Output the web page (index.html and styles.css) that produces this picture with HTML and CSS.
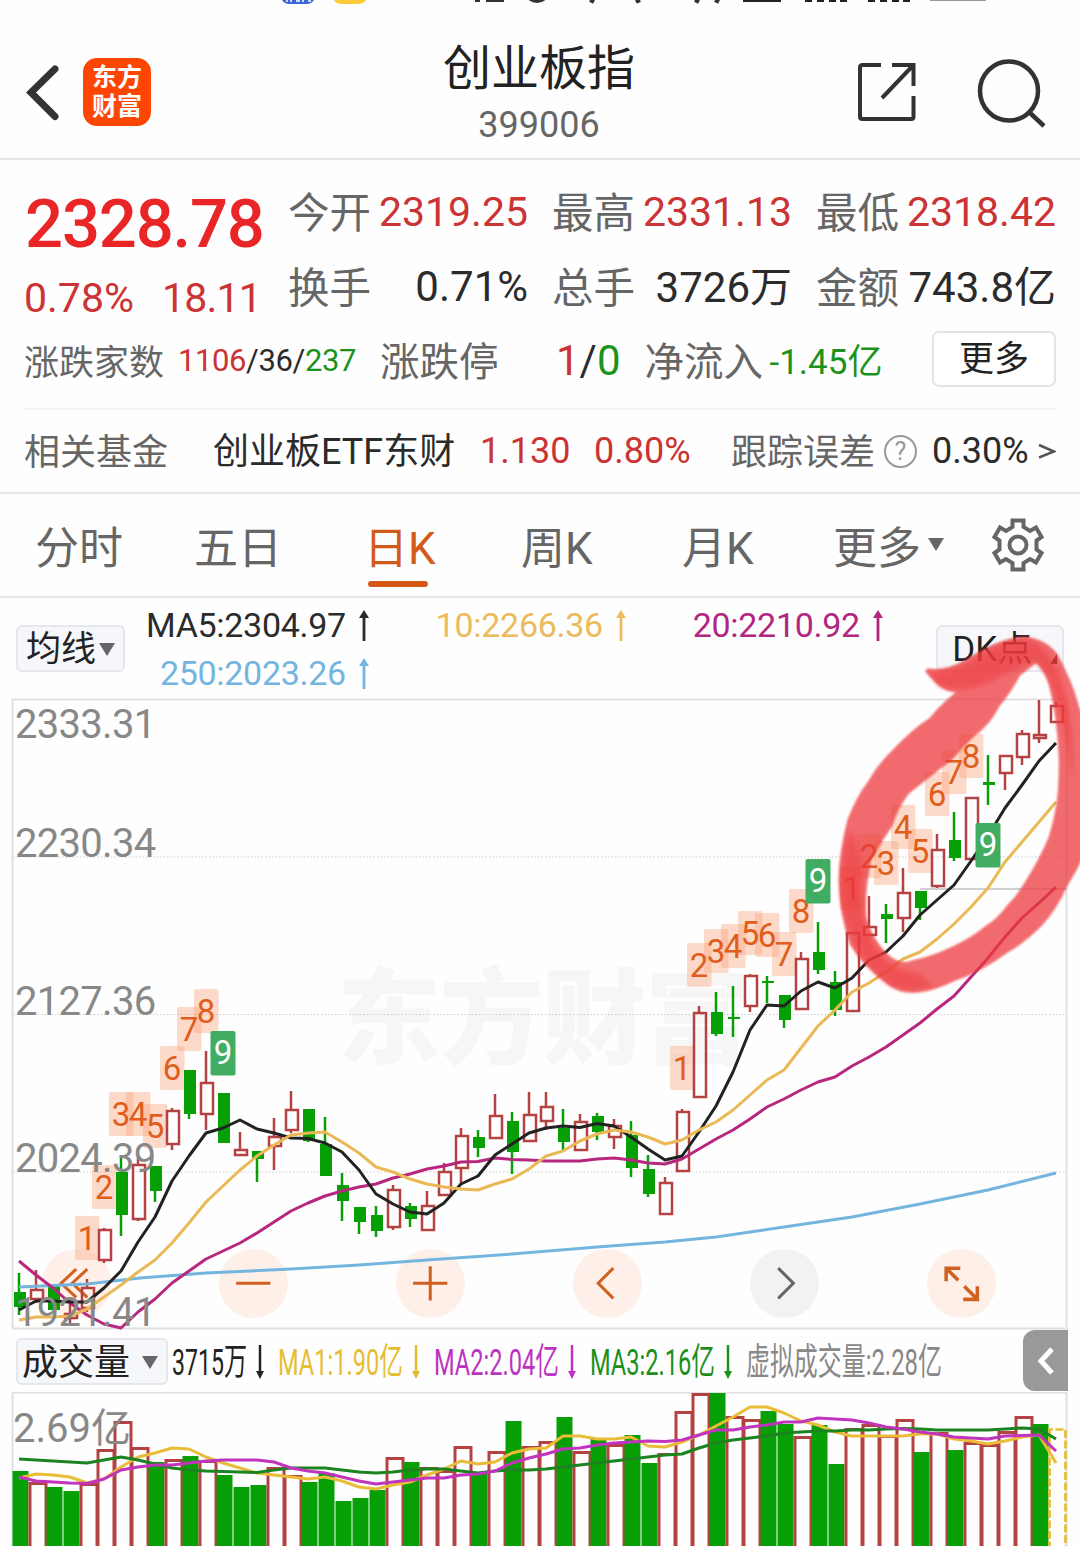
FILE: index.html
```html
<!DOCTYPE html>
<html lang="zh-CN">
  <head>
    <meta charset="UTF-8" />
    <meta name="viewport" content="width=device-width, initial-scale=1.0" />
    <title>创业板指 399006</title>
    <link rel="stylesheet" href="styles.css">
  </head>
  <body>
    <svg class="status-bar" viewBox="0 0 1080 6">
      <rect x="281" y="-20" width="34" height="24" rx="8" fill="#3a66d8" />
      <path d="M287 0v2M291 0v2M296 1h4M303 0v2M308 1h3" stroke="#fff" stroke-width="1.5" />
      <rect x="333" y="-20" width="34" height="24" rx="8" fill="#fccb3c" />
      <path d="M475 0h5M486 0h18M590 0l4 2M640 0l-4 2M695 0l4 2M715 0l4 2" stroke="#333" stroke-width="4" />
      <path d="M527 -4q10 10 20 0" fill="none" stroke="#333" stroke-width="4" />
      <path d="M743 0h38M805 0h7M817 0h7M829 0h7M840 0h7M868 0h7M880 0h7M892 0h7M903 0h7" stroke="#222" stroke-width="4" />
      <path d="M930 0h56" stroke="#999" stroke-width="2" />
    </svg>

    <header class="top-bar">
      <svg class="back" viewBox="0 0 36 60"><path d="M29 6 5 29.500l24 24" /></svg>
      <div class="app-logo"><span>东方</span><span>财富</span></div>
      <div class="title">
        <h1>创业板指</h1>
        <p>399006</p>
      </div>
      <svg class="share" viewBox="0 0 60 60">
        <path d="M24 3H5.500Q3 3 3 5.500V54.500Q3 57 5.500 57H54Q56.500 57 56.500 54.500V34M35 3H56.500V24M56 3.500 25 36" />
      </svg>
      <svg class="search" viewBox="0 0 72 72">
        <ellipse cx="33" cy="33" rx="29" ry="29.500" />
        <path d="M53 54 68 68" />
      </svg>
    </header>

    <section class="quote">
      <div class="quote-grid">
        <div class="price">
          <strong>2328.78</strong>
          <div class="change"><span>0.78%</span><span class="diff">18.11</span></div>
        </div>
        <div class="cell"><label>今开</label><b class="up">2319.25</b></div>
        <div class="cell"><label>最高</label><b class="up">2331.13</b></div>
        <div class="cell"><label>最低</label><b class="up">2318.42</b></div>
        <div class="cell"><label>换手</label><b>0.71%</b></div>
        <div class="cell"><label>总手</label><b class="cjk">3726万</b></div>
        <div class="cell"><label>金额</label><b class="cjk">743.8亿</b></div>
      </div>
      <div class="breadth">
        <label class="home">涨跌家数</label>
        <span class="count"><i class="up">1106</i>/36/<i class="down">237</i></span>
        <label class="limit">涨跌停</label>
        <span class="limit-num"><i class="up">1</i>/<i class="down">0</i></span>
        <label class="flow">净流入</label>
        <span class="flow-num down">-1.45亿</span>
        <button class="more-btn">更多</button>
      </div>
      <div class="fund">
        <label>相关基金</label>
        <span class="fund-name">创业板ETF东财</span>
        <span class="fund-price up">1.130</span>
        <span class="fund-pct up">0.80%</span>
        <label class="track">跟踪误差</label>
        <span class="help">?</span>
        <span class="track-num">0.30%</span>
        <svg class="arrow-right" viewBox="0 0 18 18"><path d="M1 3 16 9.500 1 15.500" /></svg>
      </div>
    </section>

    <nav class="tabs">
      <span class="tab">分时</span>
      <span class="tab">五日</span>
      <span class="tab active">日K</span>
      <span class="tab">周K</span>
      <span class="tab">月K</span>
      <span class="tab more">更多<i class="caret"></i></span>
      <svg class="gear" viewBox="0 0 52 54">
        <path d="M20.500 2.500h11v6.500l6.500 4 6-3.500 5.500 9.500-5 3.500v9l5 3.500-5.500 9.500-6-3.500-6.500 4v6.500h-11V45l-6.500-4-6 3.500L2.500 35l5-3.500v-9L2.500 19 8 9.500l6 3.500 6.500-4z" />
        <circle cx="26" cy="27" r="8.500" />
      </svg>
    </nav>

    <div class="ma-bar">
      <button class="pill ma-btn">均线<i class="caret"></i></button>
      <div class="ma-list">
        <span class="ma ma5">MA5:2304.97<svg class="trend" viewBox="0 0 12 32"><path d="M6 8v24" /><path class="tip" d="M6 1 11 9H1z" /></svg></span>
        <span class="ma ma10">10:2266.36<svg class="trend" viewBox="0 0 12 32"><path d="M6 8v24" /><path class="tip" d="M6 1 11 9H1z" /></svg></span>
        <span class="ma ma20">20:2210.92<svg class="trend" viewBox="0 0 12 32"><path d="M6 8v24" /><path class="tip" d="M6 1 11 9H1z" /></svg></span>
        <span class="ma ma250">250:2023.26<svg class="trend" viewBox="0 0 12 32"><path d="M6 8v24" /><path class="tip" d="M6 1 11 9H1z" /></svg></span>
      </div>
      <button class="pill dk-btn">DK点<i class="corner"></i></button>
    </div>

    <div class="chart">
      <div class="tools">
        <span class="tool"><svg viewBox="0 0 68 68"><path d="M34 20 19 34l15 14M45 20 30 34l15 14" /></svg></span>
        <span class="tool"><svg viewBox="0 0 68 68"><path d="M17 34h34" /></svg></span>
        <span class="tool"><svg viewBox="0 0 68 68"><path d="M17 34h34M34 17v34" /></svg></span>
        <span class="tool"><svg viewBox="0 0 68 68"><path d="M40 19 25 34l15 15" /></svg></span>
        <span class="tool off"><svg viewBox="0 0 68 68"><path d="M28 19 43 34 28 49" /></svg></span>
        <span class="tool"><svg viewBox="0 0 68 68"><path d="M19 32V19h14M20 20l11 11M50 37v13H36M49 49 37 37" stroke-width="3.500" /></svg></span>
      </div>
      <svg id="kline" viewBox="0 698 1080 632"></svg>
    </div>

    <div class="vol-bar">
      <button class="pill vol-btn">成交量<i class="caret"></i></button>
      <svg class="vol-legend" id="volLegend" viewBox="168 1330 840 62"></svg>
      <span class="collapse"><svg viewBox="0 0 18 30"><path d="M15 3 4 15l11 12" /></svg></span>
    </div>
    <svg class="volume" id="volume" viewBox="0 1392 1080 154"></svg>

    <!-- hand drawn marker ring -->
    <svg class="marker" viewBox="830 620 250 390">
      <path class="ink" fill-rule="evenodd" d="M928 671Q945 674 965 663Q1000 640 1025 639Q1045 642 1055 655Q1070 682 1076 705L1086 735V845Q1076 868 1065 885Q1055 908 1040 924Q1022 942 1007 950Q980 970 953 979Q935 988 918 990Q902 992 890 983Q864 964 852 943Q842 912 841 880Q842 850 850 820Q859 797 870 783Q880 765 896 750Q915 730 931 720Q944 704 964 689Q948 692 938 682ZM1018 674Q1010 690 998 704Q988 724 972 735Q960 747 950 758Q922 780 907 792Q895 808 890 825Q875 847 869 860Q862 890 864 918Q870 940 884 954Q897 968 912 963Q935 958 953 949Q973 940 987 928Q1000 920 1009 907Q1020 896 1026 885Q1042 860 1051 838Q1058 815 1060 795Q1062 770 1061 753Q1059 715 1052 687Q1047 668 1036 660Z" />
      <path class="ink dark" d="M928 671Q955 674 985 652Q1010 638 1030 640Q1050 648 1063 685Q1076 735 1072 780Q1065 725 1050 680L1036 660Q1010 672 985 684Q960 694 940 686Z" />
      <path class="ink dark" d="M850 830Q862 845 861 890Q860 930 882 955Q892 970 918 973L934 986Q905 995 887 984Q845 950 841 895Q840 855 850 830Z" />
    </svg>

    <script src="chart.js"></script>
  </body>
</html>
```

FILE: styles.css
```css
* {
  margin: 0;
  padding: 0;
  box-sizing: border-box;
}
body {
  position: relative;
  width: 1080px;
  height: 1546px;
  overflow: hidden;
  background-color: #fefefe;
  color: #2b2b2b;
  font-family: Roboto, "Noto Sans CJK SC", sans-serif;
}
svg {
  display: block;
  flex: none;
  fill: none;
}
i {
  font-style: normal;
}
button {
  font-family: inherit;
  color: #222;
}
.up {
  color: #cb3334;
}
.down {
  color: #1b921b;
}

.status-bar {
  width: 1080px;
  height: 6px;
}

/* header */
.top-bar {
  display: flex;
  align-items: center;
  height: 154px;
  padding: 20px 32px 0 26px;
  border-bottom: 2px solid #e6e6e6;
}
.top-bar svg {
  stroke: #333;
}
.back {
  width: 36px;
  height: 60px;
  margin-top: 2px;
  stroke-width: 7;
  stroke-linecap: round;
}
.app-logo {
  display: flex;
  flex-direction: column;
  align-items: center;
  justify-content: center;
  width: 68px;
  height: 68px;
  margin-left: 21px;
  border-radius: 14px;
  background-color: #fd4603;
  color: #fff;
  font-size: 25px;
  font-weight: 700;
  line-height: 29px;
}
.title {
  width: 200px;
  margin: 6px 0 0 288px;
  text-align: center;
}
.title h1 {
  font-size: 48px;
  font-weight: 400;
  line-height: 56px;
  color: #222;
}
.title p {
  padding-top: 4px;
  font-size: 36px;
  line-height: 48px;
  color: #666;
}
.share {
  width: 60px;
  height: 60px;
  margin-left: 218px;
  stroke-width: 4;
}
.search {
  width: 72px;
  height: 72px;
  margin-top: 4px;
  margin-left: 59px;
  stroke-width: 4.500;
}

/* quote */
.quote {
  height: 334px;
  padding: 14px 24px 0;
  border-bottom: 2px solid #e6e6e6;
}
.quote label {
  padding-bottom: 4px;
  color: #666;
}
.quote-grid {
  display: grid;
  grid-template-columns: 240px 238px 238px 238px;
  grid-template-rows: 75px 75px;
  column-gap: 26px;
}
.price {
  grid-row: span 2;
  color: #cb3334;
}
.price strong {
  display: block;
  height: 94px;
  padding: 6px 0 0 1px;
  font-size: 67px;
  font-weight: 500;
  line-height: 88px;
  letter-spacing: -1.2px;
  color: #e92526;
}
.change {
  display: flex;
  justify-content: space-between;
  padding-right: 3px;
  font-size: 41px;
  line-height: 60px;
}
.diff {
  letter-spacing: -0.8px;
}
.cell {
  display: flex;
  align-items: center;
  justify-content: space-between;
  font-size: 42px;
  white-space: nowrap;
}
.cell label {
  margin-left: -2px;
  padding-bottom: 4px;
  font-size: 41.500px;
}
.cell b {
  font-weight: 400;
}
.cell b.up {
  font-size: 41px;
}
.cell b.cjk {
  padding-bottom: 6px;
}
.breadth {
  display: flex;
  align-items: center;
  height: 86px;
  padding-bottom: 12px;
  border-bottom: 2px solid #f4f4f4;
  white-space: nowrap;
}
.breadth .home {
  width: 154px;
  padding-bottom: 2px;
  font-size: 35px;
}
.count {
  width: 202px;
  font-size: 31px;
  letter-spacing: -0.4px;
}
.breadth .limit,
.breadth .flow {
  padding-bottom: 4px;
  font-size: 39.500px;
}
.limit-num {
  width: 122px;
  text-align: right;
  font-size: 42px;
}
.breadth .flow {
  width: 125px;
  margin-left: 24px;
}
.flow-num {
  padding-bottom: 4px;
  font-size: 35px;
}
.more-btn {
  width: 124px;
  height: 56px;
  margin: -2px 0 0 auto;
  padding-top: 1px;
  border: 2px solid #e4e4e6;
  border-radius: 7px;
  background: #fff;
  font-size: 35px;
  line-height: 51px;
}
.fund {
  display: flex;
  align-items: center;
  height: 82px;
  font-size: 36px;
  white-space: nowrap;
}
.fund label {
  width: 144px;
}
.fund-name {
  width: 240px;
  margin-left: 45px;
  padding-bottom: 6px;
}
.fund-price {
  width: 114px;
  margin-left: 27px;
}
.fund-pct {
  width: 137px;
}
.help {
  width: 33px;
  height: 33px;
  margin-left: 9px;
  border: 2px solid #999;
  border-radius: 50%;
  color: #999;
  font-size: 25px;
  line-height: 30px;
  text-align: center;
}
.track-num {
  margin-left: 15px;
}
.arrow-right {
  width: 18px;
  height: 18px;
  margin-left: auto;
  stroke: #555;
  stroke-width: 2.500;
}

/* tabs */
.tabs {
  display: flex;
  align-items: center;
  height: 104px;
  padding-left: 35px;
  border-bottom: 2px solid #e6e6e6;
  font-size: 44px;
  color: #666;
  white-space: nowrap;
}
.tab {
  position: relative;
  width: 159px;
  padding-bottom: 1px;
}
.tab.active {
  text-indent: -2px;
  color: #d25b1b;
}
.tab:nth-child(2) {
  width: 172px;
}
.tab:nth-child(3) {
  width: 155px;
}
.tab:nth-child(4) {
  width: 161px;
}
.tab:nth-child(5) {
  width: 151px;
}
.tab.active::after {
  content: "";
  position: absolute;
  left: 2px;
  bottom: -9px;
  width: 60px;
  height: 6px;
  border-radius: 3px;
  background-color: #d55a18;
}
.tab.more {
  display: flex;
  align-items: center;
}
.caret {
  border: 8px solid transparent;
  border-top: 13px solid #666;
  border-bottom: 0;
}
.tab.more .caret {
  margin: 0 0 0 7px;
}
.gear {
  width: 52px;
  height: 54px;
  stroke: #666;
  stroke-width: 4;
}

/* moving averages */
.ma-bar {
  display: flex;
  align-items: flex-start;
  height: 100px;
  padding: 0 16px;
}
.pill {
  display: flex;
  align-items: center;
  height: 47px;
  margin-top: 27px;
  padding-top: 2px;
  border: 2px solid #e6e7ec;
  border-radius: 6px;
  background-color: #f6f7fa;
  font-size: 35px;
  line-height: 40px;
  white-space: nowrap;
}
.ma-btn {
  width: 109px;
  padding-left: 8px;
}
.ma-btn .caret {
  margin-left: 3px;
}
.ma-list {
  display: grid;
  grid-template-columns: 223px 272px 192px;
  grid-template-rows: 48px 48px;
  width: 791px;
  margin-left: 22px;
  padding-top: 3px;
  font-size: 34px;
  letter-spacing: -0.3px;
}
.ma {
  display: flex;
  align-items: center;
  justify-content: flex-end;
  white-space: nowrap;
}
.ma10 {
  padding-right: 15px;
  color: #ebbb5c;
}
.ma20 {
  margin-right: -50px;
  color: #b12780;
}
.ma250 {
  color: #74b5e0;
}
.trend {
  width: 12px;
  height: 32px;
  margin-left: 12px;
  stroke: currentColor;
  stroke-width: 2.800;
}
.trend .tip {
  fill: currentColor;
  stroke: none;
}
.dk-btn {
  position: relative;
  width: 128px;
  padding-left: 14px;
}
.corner {
  position: absolute;
  right: 5px;
  bottom: 6px;
  border-left: 7px solid transparent;
  border-bottom: 10px solid #222;
}

/* k line */
.chart {
  position: relative;
  height: 632px;
}
#kline {
  position: relative;
}
.chart text,
.volume text {
  font-size: 40px;
  fill: #888;
}
.chart .axis {
  letter-spacing: -0.7px;
}
.chart .water {
  font-size: 104px;
  font-weight: 900;
  fill: #f6f6f6;
}
.chart .seq {
  font-size: 33px;
  fill: #e05d1c;
  text-anchor: middle;
}
.chart .seq.nine {
  fill: #fff;
}
.tools {
  position: absolute;
  left: 42px;
  top: 551px;
  display: flex;
  gap: 108.500px;
}
.tool {
  width: 68.500px;
  height: 68.500px;
  border-radius: 50%;
  background-color: #fef0e9;
}
.tool svg {
  stroke: #d0601f;
  stroke-width: 3;
}
.tool.off {
  background-color: #f2f2f3;
}
.tool.off svg {
  stroke: #666;
}

/* volume */
.vol-bar {
  display: flex;
  height: 62px;
  padding-left: 16px;
}
.vol-btn {
  width: 152px;
  margin-top: 8px;
  padding-left: 4px;
  font-size: 36px;
}
.vol-btn .caret {
  margin-left: 12px;
}
.vol-legend {
  width: 840px;
  height: 62px;
  font-size: 37px;
}
.collapse {
  display: flex;
  align-items: center;
  justify-content: center;
  width: 45px;
  height: 61px;
  margin-left: 15px;
  border-radius: 12px 0 0 12px;
  background-color: #999;
}
.collapse svg {
  width: 18px;
  height: 30px;
  stroke: #fff;
  stroke-width: 5;
}
.volume {
  width: 1080px;
  height: 154px;
}

.marker {
  position: absolute;
  left: 830px;
  top: 620px;
  width: 250px;
  height: 390px;
}
.ink {
  fill: #ed393c;
  stroke: #ed393c;
  stroke-width: 5;
  stroke-linejoin: round;
  opacity: 0.74;
  filter: blur(0.8px);
}
.ink.dark {
  stroke: none;
  opacity: 0.5;
  filter: blur(2.5px);
}
```

FILE: chart.js
```js
const STEP = 17;
const X0 = 19;
const RED = "#b54242";
const GREEN = "#06a006";

// type, high, body top, body bottom, low
const candles = [
  ["g", 1273, 1292, 1307, 1315], ["r", 1270, 1290, 1299, 1303], ["g", 1285, 1286, 1310, 1310], ["r", 1300, 1314, 1318, 1325],
  ["r", 1279, 1288, 1308, 1312], ["r", 1228, 1230, 1260, 1263], ["g", 1155, 1172, 1215, 1236], ["r", 1156, 1165, 1219, 1221],
  ["g", 1166, 1166, 1191, 1202], ["r", 1108, 1111, 1144, 1150], ["g", 1070, 1070, 1114, 1119], ["r", 1051, 1083, 1114, 1130],
  ["g", 1093, 1093, 1143, 1143], ["r", 1132, 1150, 1155, 1155], ["g", 1151, 1151, 1159, 1182], ["r", 1118, 1137, 1146, 1170],
  ["r", 1091, 1110, 1130, 1133], ["g", 1109, 1109, 1141, 1142], ["g", 1117, 1144, 1176, 1176], ["g", 1173, 1185, 1201, 1221],
  ["g", 1207, 1207, 1222, 1234], ["g", 1206, 1215, 1231, 1237], ["r", 1185, 1190, 1227, 1230], ["g", 1203, 1206, 1219, 1227],
  ["r", 1191, 1206, 1230, 1230], ["r", 1163, 1172, 1195, 1196], ["r", 1128, 1136, 1168, 1184], ["g", 1130, 1137, 1148, 1157],
  ["r", 1094, 1116, 1138, 1138], ["g", 1112, 1121, 1152, 1174], ["r", 1092, 1115, 1141, 1141], ["r", 1092, 1107, 1121, 1130],
  ["g", 1109, 1128, 1142, 1152], ["r", 1114, 1122, 1150, 1150], ["g", 1113, 1116, 1132, 1140], ["r", 1119, 1126, 1137, 1149],
  ["g", 1121, 1135, 1168, 1177], ["g", 1155, 1169, 1194, 1197], ["r", 1177, 1183, 1214, 1214], ["r", 1109, 1112, 1171, 1171],
  ["r", 1006, 1013, 1097, 1097], ["g", 992, 1012, 1034, 1036], ["g", 986, 1017, 1019, 1037], ["r", 974, 976, 1006, 1012],
  ["g", 976, 981, 983, 1003], ["g", 995, 995, 1020, 1028], ["r", 952, 959, 1009, 1009], ["g", 922, 952, 970, 974],
  ["g", 971, 982, 1010, 1016], ["r", 933, 933, 1011, 1011], ["r", 896, 927, 935, 935], ["g", 904, 914, 919, 943],
  ["r", 868, 893, 918, 932], ["g", 891, 891, 908, 920], ["r", 834, 850, 886, 888], ["g", 812, 840, 858, 861],
  ["r", 798, 798, 859, 860], ["g", 755, 782, 785, 805], ["r", 756, 756, 773, 790], ["r", 730, 734, 757, 765],
  ["r", 700, 735, 738, 743], ["r", 702, 706, 722, 723],
];

const ma5 = [1310, 1301, 1301, 1302, 1302, 1288, 1271, 1242, 1217, 1181, 1156, 1133, 1128, 1120, 1129, 1133, 1138, 1138.5, 1143, 1152, 1170, 1194, 1204, 1212, 1214, 1203, 1184, 1176, 1155, 1144, 1133, 1128, 1126, 1127.5, 1123.5, 1126, 1137, 1149, 1160, 1156, 1132, 1106, 1072, 1030, 1005, 1006, 991, 982, 988, 978, 960, 952, 936, 915, 900, 885, 861, 836, 808, 785, 761, 743];
const ma10 = [1320, 1317, 1317, 1316, 1309, 1297, 1285, 1272, 1260, 1243, 1223, 1202, 1186, 1170, 1156, 1145, 1135, 1133, 1132, 1142, 1153, 1167, 1172, 1179, 1184, 1187, 1189, 1190, 1184, 1179, 1169, 1156, 1151, 1141, 1134, 1130, 1132, 1137, 1144, 1140, 1130, 1122, 1110, 1095, 1080, 1070, 1048, 1026, 1010, 992, 983, 972, 959, 952, 939, 924, 907, 888, 862, 842, 822, 802];
const ma20 = [1261, 1275, 1288, 1303, 1315, 1324, 1328, 1312, 1299, 1283, 1271, 1259, 1251, 1243, 1233, 1222, 1211, 1203, 1196, 1191, 1187, 1184, 1178, 1174, 1169, 1166, 1162, 1161.5, 1158, 1159.5, 1160, 1161, 1161, 1161, 1159, 1158, 1160, 1163, 1164, 1159, 1149, 1139, 1130, 1119, 1107, 1099, 1090, 1082, 1077, 1066, 1057, 1047, 1035, 1023, 1009, 996, 977, 958, 937, 918, 903, 887];
const ma250 = "19,1287 87,1284 140,1278 206,1273 291,1269 359,1265 427,1260 512,1254 597,1247 665,1242 716,1237 784,1227 852,1217 920,1204 988,1190 1056,1173";

// first candle index and the top of each numbered tag
const sequences = [
  [4, [1216, 1165, 1092, 1092, 1104, 1046, 1007, 989, 1031]],
  [39, [1046, 943, 929, 924, 911, 913, 932, 889, 859]],
  [49, [866, 834, 841, 805, 829, 772, 750, 734, 823]],
];

const volumes = "g1471 r1482 g1487 g1491 r1483 r1449 r1421 r1447 g1462 r1459 g1456 r1460 g1475 g1487 g1485 r1467 r1475 g1482 g1473 g1501 g1498 g1490 r1457 g1462 r1467 r1470 r1446 g1472 r1451 g1421 r1446 r1441 g1417 r1451 g1439 r1444 g1435 g1463 r1453 r1411 r1393 g1393 r1416 r1419 g1411 g1424 r1436 g1425 g1464 r1428 r1424 r1435 r1419 g1452 r1432 g1450 r1442 r1444 r1431 r1416 g1424".split(" ");
const vma1 = [1478, 1474, 1475, 1477, 1483, 1479, 1467, 1457, 1453, 1448, 1449, 1457, 1463, 1468, 1473, 1475, 1477, 1479, 1477, 1481, 1487, 1489, 1485, 1482, 1475, 1469, 1461, 1464, 1462, 1453, 1449, 1448, 1436, 1436, 1439, 1439, 1437, 1446, 1447, 1442, 1435, 1426, 1417, 1407, 1407, 1413, 1421, 1425, 1432, 1436, 1436, 1436, 1436, 1434, 1434, 1439, 1441, 1444, 1441, 1437, 1435, 1463];
const vma2 = [1477, 1481, 1482, 1483, 1483.5, 1479, 1470, 1467, 1465, 1465, 1463, 1461, 1460, 1460, 1460, 1462, 1468, 1471, 1473, 1477, 1481, 1484, 1482, 1480, 1478, 1478, 1475, 1474, 1471, 1463, 1458, 1454, 1449, 1448, 1445, 1443, 1442, 1441, 1441.5, 1440, 1435, 1430, 1430, 1427, 1425, 1422, 1422, 1418, 1419, 1420, 1423, 1427, 1429, 1432, 1434, 1437, 1438, 1439, 1436, 1435.5, 1435, 1451];
const vma3 = [1459, 1460, 1461, 1462, 1463, 1460, 1457, 1460, 1464, 1468, 1470, 1471, 1471.5, 1472, 1472.5, 1470, 1468, 1468, 1468, 1470, 1472, 1473, 1472, 1470, 1469, 1469, 1471, 1473, 1471, 1470, 1470, 1469, 1467, 1465, 1463, 1461, 1459, 1457, 1455, 1454, 1448, 1443, 1440, 1438, 1436, 1433, 1432, 1431, 1431, 1430, 1430, 1429, 1428.5, 1429, 1430, 1430, 1430, 1430, 1429, 1428, 1429, 1439];

function points(values) {
  return values.map((y, i) => `${X0 + i * STEP},${y}`).join(" ");
}

function line(pts, color, width = 3) {
  return `<polyline points="${pts}" fill="none" stroke="${color}" stroke-width="${width}" stroke-linejoin="round" />`;
}

function drawKline() {
  let s = `<text class="water" x="337" y="1056" textLength="412">东方财富</text>`;
  s += `<path d="M12.500 1328V699.500H1066.500V1328.500H12" stroke="#e0e0e2" stroke-width="2" />`;
  [857, 1014.5, 1172].forEach((y) => {
    s += `<path d="M13 ${y}H1067" stroke="#ccc" stroke-width="1" stroke-dasharray="1.500 2" />`;
  });
  s += `<path d="M920 889H1067" stroke="#cfcfd4" stroke-width="2" />`;

  sequences.forEach(([start, tops]) => {
    tops.slice(0, 8).forEach((y, i) => {
      const x = X0 + (start + i) * STEP;
      s += `<rect x="${x - 12}" y="${y}" width="24.500" height="44" rx="2" fill="rgba(251,166,128,.42)" />`;
    });
    tops.slice(0, 8).forEach((y, i) => {
      s += `<text class="seq" x="${X0 + (start + i) * STEP}" y="${y + 33.5}">${i + 1}</text>`;
    });
  });

  candles.forEach(([type, high, top, bottom, low], i) => {
    const x = X0 + i * STEP;
    if (type === "g") {
      s += `<path d="M${x} ${high}V${low}" stroke="${GREEN}" stroke-width="2.500" />`;
      s += `<rect x="${x - 5}" y="${top}" width="12" height="${bottom - top}" fill="${GREEN}" />`;
    } else {
      s += `<path d="M${x} ${high}V${top}M${x} ${bottom}V${low}" stroke="${RED}" stroke-width="2.500" />`;
      s += `<rect x="${x - 5}" y="${top}" width="12" height="${bottom - top}" stroke="${RED}" stroke-width="2.500" />`;
    }
  });

  s += line(ma250, "#74b5e0");
  s += line(points(ma20), "#b8277f");
  s += line(points(ma5), "#222");
  s += line(points(ma10), "#eab955");

  sequences.forEach(([start, tops]) => {
    const x = X0 + (start + 8) * STEP;
    s += `<rect x="${x - 12.5}" y="${tops[8]}" width="25" height="44.500" rx="2" fill="#41ad62" />`;
    s += `<text class="seq nine" x="${x}" y="${tops[8] + 33}">9</text>`;
  });

  [["2333.31", 738], ["2230.34", 857], ["2127.36", 1014.5], ["2024.39", 1171.5], ["1921.41", 1325.5]].forEach(([t, y]) => {
    s += `<text class="axis" x="15" y="${y}">${t}</text>`;
  });
  document.getElementById("kline").innerHTML = s;
}

function drawLegend() {
  const items = [
    ["3715万", 172, 75, 260, "#222"],
    ["MA1:1.90亿", 278, 125, 416, "#e6bd32"],
    ["MA2:2.04亿", 434, 125, 572, "#bb34bf"],
    ["MA3:2.16亿", 590, 125, 728, "#1b8f1b"],
    ["虚拟成交量:2.28亿", 746, 196, 0, "#888"],
  ];
  document.getElementById("volLegend").innerHTML = items.map(([t, x, w, arrow, color]) => {
    let s = `<text x="${x}" y="1375" textLength="${w}" lengthAdjust="spacingAndGlyphs" fill="${color}">${t}</text>`;
    if (arrow) {
      s += `<path d="M${arrow} 1345V1374" stroke="${color}" stroke-width="2.500" /><path d="M${arrow - 4} 1371h8l-4 8z" fill="${color}" />`;
    }
    return s;
  }).join("");
}

function drawVolume() {
  let s = `<path d="M12.500 1546V1392.500H1066.500V1546" stroke="#e0e0e2" stroke-width="2" />`;
  volumes.forEach((v, i) => {
    const x = 12.5 + i * STEP;
    const y = +v.slice(1);
    s += v[0] === "g"
      ? `<rect x="${x}" y="${y}" width="16" height="${1560 - y}" fill="${GREEN}" />`
      : `<rect x="${x + 0.5}" y="${y + 1.5}" width="16" height="${1560 - y}" stroke="${RED}" stroke-width="3" />`;
  });
  s += `<path d="M1049.500 1560V1429.500H1065.500V1560" stroke="#e4bd36" stroke-width="2.700" stroke-dasharray="8 2.500" />`;
  s += line(points(vma1), "#e9bd38");
  s += line(points(vma3), "#1b8420");
  s += line(points(vma2), "#c134bd");
  s += `<text x="13" y="1442">2.69亿</text>`;
  document.getElementById("volume").innerHTML = s;
}

drawKline();
drawLegend();
drawVolume();
```
